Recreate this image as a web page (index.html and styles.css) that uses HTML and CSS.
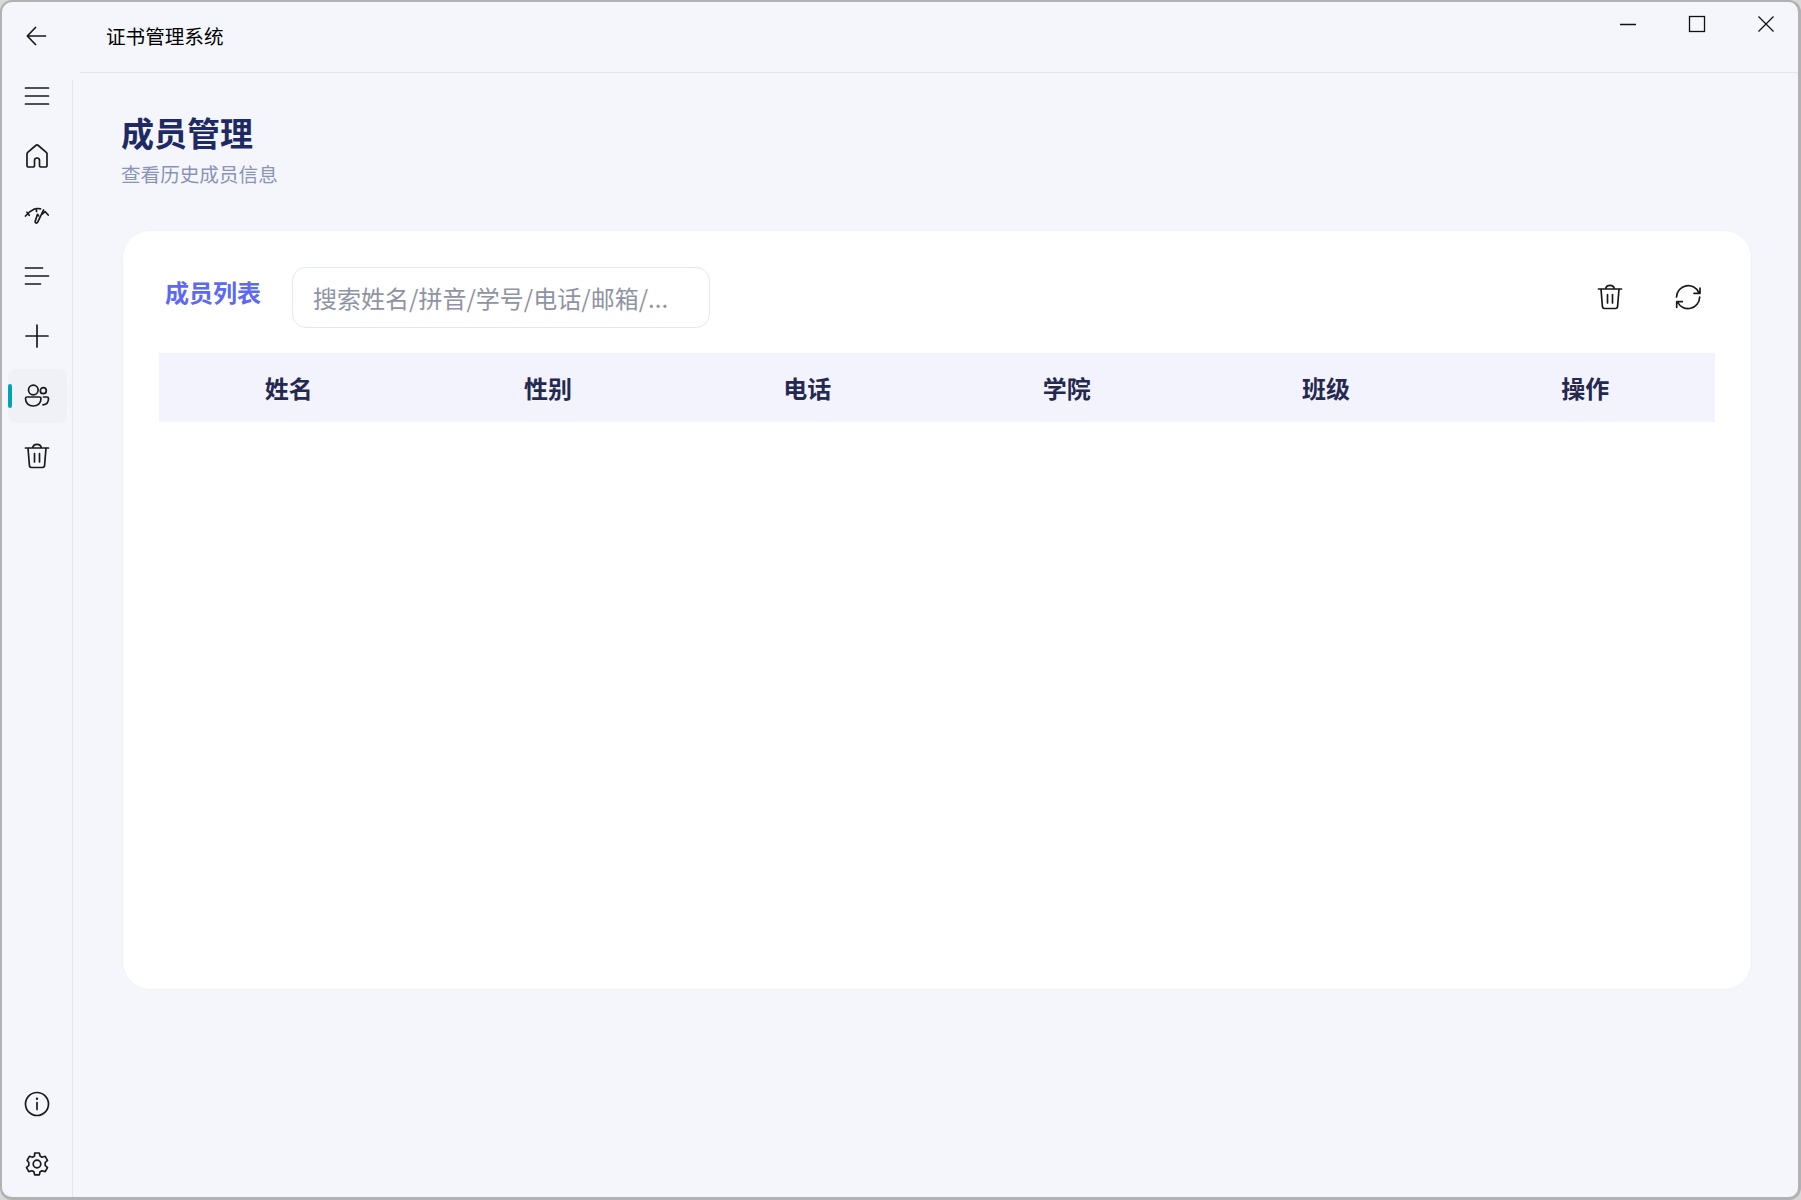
FILE: index.html
```html
<!DOCTYPE html>
<html lang="zh-CN">
<head>
<meta charset="utf-8">
<title>证书管理系统</title>
<link rel="stylesheet" href="styles.css">
</head>
<body>
<div class="window">
  <aside class="sidebar">
    <div class="nav-group">
      <button class="nav-item"><svg class="icon" viewBox="0 0 28 28"><path d="M22.500 14H4.500M12.500 5.500 4.300 14l8.200 8.500"/></svg></button>
      <button class="nav-item"><svg class="icon" viewBox="0 0 28 28"><path d="M2.500 6h23M2.500 14h23M2.500 22h23"/></svg></button>
      <button class="nav-item"><svg class="icon" viewBox="0 0 28 28"><path d="M5.500 25h4.500a1.500 1.500 0 0 0 1.500-1.500v-5a2.500 2.500 0 0 1 5 0v5A1.500 1.500 0 0 0 18 25h4.500a1.500 1.500 0 0 0 1.500-1.500V11.800a2 2 0 0 0-.7-1.500L15.300 3.500a2 2 0 0 0-2.600 0L4.700 10.300a2 2 0 0 0-.7 1.500v11.700A1.500 1.500 0 0 0 5.500 25z"/></svg></button>
      <button class="nav-item"><svg class="icon" viewBox="0 0 28 28"><path d="M2.500 14Q6 9.500 10.500 7.500M4 10.300l2.200 3M10.500 7.500Q13.500 6 17.500 6.800M13.500 6.500v3M20.500 8 14.600 20.300c-.9 1.300-2.900.8-2.400-1l2.300-7 1 1.500M19.500 12l2.500-2.500 3.200 3.500"/></svg></button>
      <button class="nav-item"><svg class="icon" viewBox="0 0 28 28"><path d="M2.500 6h17M2.500 14h23M2.500 22h15"/></svg></button>
      <button class="nav-item"><svg class="icon" viewBox="0 0 28 28"><path d="M14 3v22M3 14h22"/></svg></button>
      <button class="nav-item is-active"><span class="nav-mark"></span><svg class="icon" viewBox="0 0 28 28"><circle cx="10.300" cy="8" r="4.800"/><circle cx="20.300" cy="8.700" r="3"/><path d="M2.500 16.500a1.500 1.500 0 0 1 1.500-1.500h12.500a1.500 1.500 0 0 1 1.500 1.500c0 5-3.500 7.500-7.800 7.500s-7.700-2.500-7.700-7.500M20.500 15h3.500a1.500 1.500 0 0 1 1.500 1.500c0 3.500-2.200 6-5.500 6.300"/></svg></button>
      <button class="nav-item"><svg class="icon" viewBox="0 0 28 28"><path d="M2.500 6h23M9.500 6c.5-2.500 2-3.700 4.500-3.700s4 1.200 4.500 3.700M5 6l1.400 17.300a2.200 2.200 0 0 0 2.200 2.200h10.800a2.200 2.200 0 0 0 2.200-2.200L23 6M11.500 11.500v8.500M16.500 11.500v8.500"/></svg></button>
    </div>
    <div class="nav-group">
      <button class="nav-item"><svg class="icon" viewBox="0 0 28 28"><circle cx="14" cy="14" r="11.500"/><path d="M14 12.500v7"/><circle class="dot" cx="14" cy="8.800" r="1.200"/></svg></button>
      <button class="nav-item"><svg class="icon" viewBox="0 0 28 28"><circle cx="14" cy="14" r="3.800"/><path d="M11.700 3h4.600l.8 3.100 2 1.100 3.100-.9 2.300 4-2.300 2.200v2.900l2.300 2.200-2.300 4-3.100-.9-2 1.100-.8 3.100h-4.600l-.8-3.100-2-1.100-3.100.9-2.300-4 2.300-2.200v-2.900L4.100 10.300l2.300-4 3.100.9 2-1.100z"/></svg></button>
    </div>
  </aside>
  <div class="content-column">
    <header class="titlebar">
      <span class="app-title">证书管理系统</span>
      <div class="window-controls">
        <button class="win-btn"><svg class="win-icon" viewBox="0 0 18 18"><path d="M1 9.500h16"/></svg></button>
        <button class="win-btn"><svg class="win-icon" viewBox="0 0 18 18"><rect x="1.500" y="1.500" width="15" height="15"/></svg></button>
        <button class="win-btn"><svg class="win-icon" viewBox="0 0 18 18"><path d="M1.500 1.500l15 15M16.500 1.500l-15 15"/></svg></button>
      </div>
    </header>
    <main class="main">
      <h1 class="page-title">成员管理</h1>
      <p class="page-subtitle">查看历史成员信息</p>
      <section class="card">
        <div class="toolbar">
          <h2 class="section-title">成员列表</h2>
          <input class="search" type="text" placeholder="搜索姓名/拼音/学号/电话/邮箱/...">
          <div class="toolbar-actions">
            <button class="tool-btn"><svg class="icon" viewBox="0 0 28 28"><path d="M2.500 6h23M9.500 6c.5-2.500 2-3.700 4.500-3.700s4 1.200 4.500 3.700M5 6l1.400 17.300a2.200 2.200 0 0 0 2.200 2.200h10.800a2.200 2.200 0 0 0 2.200-2.200L23 6M11.500 11.500v8.500M16.500 11.500v8.500"/></svg></button>
            <button class="tool-btn"><svg class="icon" viewBox="0 0 28 28"><path d="M2.500 14A11.700 11.700 0 0 1 25 9.800M20 10.300h6V5M25.700 14A11.700 11.700 0 0 1 3.500 19M8.300 18.700H2.700v5.600"/></svg></button>
          </div>
        </div>
        <div class="table-head">
          <div class="th">姓名</div>
          <div class="th">性别</div>
          <div class="th">电话</div>
          <div class="th">学院</div>
          <div class="th">班级</div>
          <div class="th">操作</div>
        </div>
      </section>
    </main>
  </div>
</div>
</body>
</html>
```
FILE: styles.css
```css
* { box-sizing: border-box; }
html, body { margin: 0; height: 100%; }
body {
  background: #d8d8d8;
  font-family: "Noto Sans CJK SC", "Noto Sans", sans-serif;
  overflow: hidden;
}
button {
  border: 0;
  background: none;
  padding: 0;
  margin: 0;
  display: flex;
  align-items: center;
  justify-content: center;
}
.window {
  width: 1801px;
  height: 1200px;
  display: grid;
  grid-template-columns: 70px 1fr;
  background: #f5f6fb;
  border: 2px solid #b2b2b2;
  border-right-width: 3px;
  border-bottom-width: 3px;
  border-radius: 12px;
  overflow: hidden;
}
.sidebar {
  display: flex;
  flex-direction: column;
  justify-content: space-between;
  padding: 7px 5px 6px 6px;
}
.nav-group {
  display: flex;
  flex-direction: column;
  gap: 6px;
}
.nav-item {
  position: relative;
  height: 54px;
  width: 59px;
  padding-right: 2px;
  border-radius: 8px;
}
.nav-item.is-active { background: #f0f1f6; }
.nav-mark {
  position: absolute;
  left: 0;
  top: 15px;
  width: 4px;
  height: 24px;
  border-radius: 2px;
  background: #00a5b2;
}
.icon {
  width: 28px;
  height: 28px;
  fill: none;
  stroke: #1a1a1a;
  stroke-width: 1.700;
  stroke-linecap: round;
  stroke-linejoin: round;
}
.dot { fill: #1a1a1a; stroke: none; }
.content-column {
  display: flex;
  flex-direction: column;
  min-width: 0;
}
.titlebar {
  height: 70px;
  display: flex;
  justify-content: space-between;
  padding-left: 34px;
  flex: none;
}
.app-title {
  font-size: 19.600px;
  line-height: 28px;
  margin-top: 20px;
  color: #000;
}
.window-controls {
  display: flex;
  margin-right: -2px;
}
.win-btn {
  width: 69px;
  height: 44px;
}
.win-icon {
  width: 18px;
  height: 18px;
  fill: none;
  stroke: #111;
  stroke-width: 1.300;
}
.main {
  position: relative;
  flex: 1;
  border-left: 1px solid #e4e5ea;
  border-top: 1px solid #e4e5ea;
  border-top-left-radius: 8px;
  padding: 0 46px 0 48px;
  display: flex;
  flex-direction: column;
}
.main::before {
  content: "";
  position: absolute;
  left: -1px;
  top: -1px;
  width: 8px;
  height: 8px;
  background: #f5f6fb;
}
.page-title {
  margin: 37px 0 0;
  font-size: 33px;
  line-height: 44px;
  font-weight: 700;
  color: #1e2a64;
}
.page-subtitle {
  margin: 6px 0 0;
  font-size: 19.600px;
  line-height: 28px;
  color: #8a93b8;
}
.card {
  margin-top: 42px;
  margin-left: 1px;
  height: 760px;
  background: #fff;
  border: 1px solid #f0f1fa;
  border-radius: 28px;
  padding: 36px 36px 0;
}
.toolbar {
  display: flex;
  align-items: center;
  height: 61px;
}
.section-title {
  margin: 0 0 12px 6px;
  font-size: 24px;
  line-height: 32px;
  font-weight: 700;
  color: #5d69f5;
  flex: none;
}
.search {
  margin-left: 31px;
  width: 418px;
  height: 61px;
  border: 1.500px solid #e3e6fb;
  border-radius: 14px;
  background: #fff;
  padding: 0 20px;
  font: 24px "Noto Sans CJK SC", "Noto Sans", sans-serif;
  outline: none;
}
.search::placeholder { color: #8f93a3; opacity: 1; }
.toolbar-actions {
  margin-left: auto;
  margin-right: 13px;
  display: flex;
  margin-bottom: 2px;
  gap: 50px;
}
.tool-btn { width: 28px; height: 28px; }
.table-head {
  margin-top: 25px;
  height: 69px;
  display: grid;
  grid-template-columns: repeat(6, 1fr);
  align-items: center;
  background: #f2f3fd;
}
.th {
  text-align: center;
  font-size: 24px;
  line-height: 32px;
  font-weight: 700;
  color: #25284f;
}
```
